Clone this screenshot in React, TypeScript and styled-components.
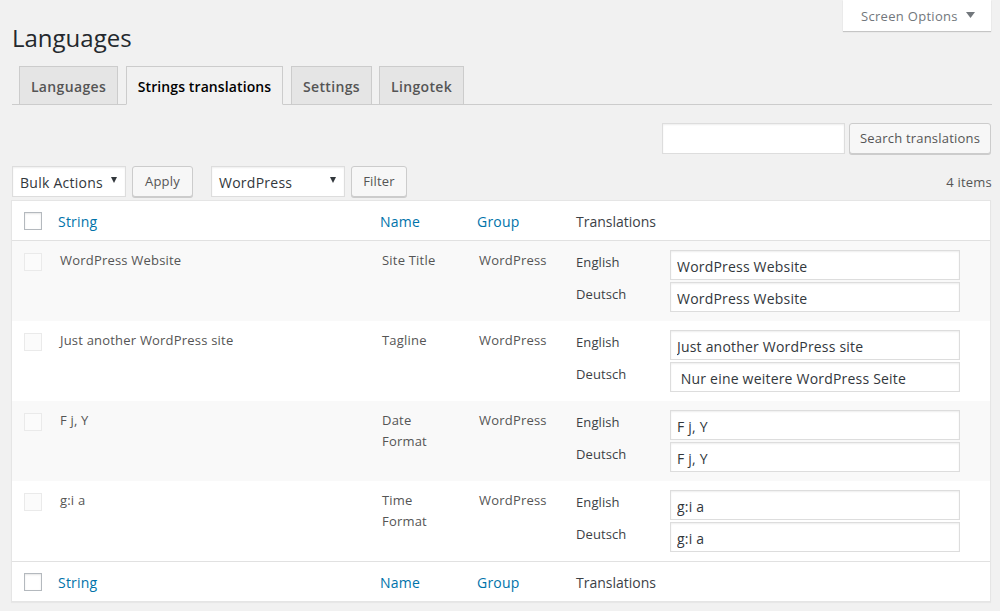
import React from "react";
import styled, { createGlobalStyle } from "styled-components";

const Global = createGlobalStyle`
  html, body { margin: 0; padding: 0; background: #f1f1f1; }
  body { font-family: "Open Sans", "Noto Sans", sans-serif; font-size: 13px; color: #444; }
  * { box-sizing: border-box; }
`;

const Page = styled.div`
  width: 1000px;
  height: 611px;
  padding: 0 8px 0 12px;
  overflow: hidden;
`;
const ScreenMeta = styled.div`
  display: flex;
  justify-content: flex-end;
  height: 32px;
  padding-right: 1px;
`;
const ScreenOptions = styled.div`
  width: 148px;
  height: 31px;
  background: #fff;
  box-shadow: 0 1px 1px rgba(0, 0, 0, 0.18);
  display: flex;
  align-items: center;
  gap: 8px;
  padding: 0 0 0 18px;
  font-size: 13px;
  letter-spacing: 0.3px;
  line-height: 32px;
  color: #72777c;
`;
const Caret = styled.svg`
  display: block;
  flex: none;
  margin-top: -1px;
`;
const Title = styled.h1`
  margin: -9px 0 0;
  font-size: 24px;
  font-weight: 400;
  line-height: 29px;
  height: 29px;
  color: #23282d;
`;
const Tabs = styled.div`
  display: flex;
  margin-top: 14px;
  height: 39px;
  padding-left: 7px;
  gap: 8px;
  border-bottom: 1px solid #ccc;
`;
const Tab = styled.div<{ $active?: boolean; $w: number; $ml?: number }>`
  width: ${(p) => p.$w}px;
  height: ${(p) => (p.$active ? 39 : 38)}px;
  margin-left: ${(p) => p.$ml ?? 0}px;
  border: 1px solid #ccc;
  border-bottom: ${(p) => (p.$active ? "1px solid #f1f1f1" : "none")};
  background: ${(p) => (p.$active ? "#f1f1f1" : "#e5e5e5")};
  color: ${(p) => (p.$active ? "#000" : "#555")};
  font-size: 14px;
  font-weight: 600;
  letter-spacing: ${(p) => (p.$active ? 0.1 : 0.35)}px;
  line-height: 40px;
  text-align: center;
  white-space: nowrap;
`;
const SearchRow = styled.div`
  display: flex;
  justify-content: flex-end;
  gap: 4px;
  margin-top: 18px;
  padding-right: 1px;
  height: 31px;
`;
const SearchInput = styled.input`
  width: 183px;
  height: 31px;
  background: #fff;
  border: 1px solid #ddd;
  box-shadow: inset 0 1px 2px rgba(0, 0, 0, 0.07);
  padding: 0 6px;
  outline: none;
`;
const Button = styled.button<{ $w: number; $ml?: number }>`
  width: ${(p) => p.$w}px;
  height: 31px;
  margin-left: ${(p) => p.$ml ?? 0}px;
  padding: 0 0 2px;
  background: #f7f7f7;
  border: 1px solid #ccc;
  border-radius: 3px;
  box-shadow: 0 1px 0 #ccc;
  color: #555;
  font-family: inherit;
  font-size: 13px;
  letter-spacing: 0.2px;
  line-height: 26px;
  white-space: nowrap;
`;
const Toolbar = styled.div`
  display: flex;
  align-items: flex-start;
  margin-top: 12px;
  height: 34px;
`;
const SelectBox = styled.div<{ $w: number; $ml?: number }>`
  position: relative;
  width: ${(p) => p.$w}px;
  height: 31px;
  margin-left: ${(p) => p.$ml ?? 0}px;
  background: #fff;
  border: 1px solid #ddd;
  box-shadow: inset 0 1px 2px rgba(0, 0, 0, 0.07);
  color: #32373c;
  font-size: 14px;
  letter-spacing: 0.25px;
  line-height: 31px;
  padding-left: 7px;
  white-space: nowrap;
`;
const SelectCaret = styled.svg`
  position: absolute;
  right: 8px;
  top: 10px;
`;
const Count = styled.div`
  margin-left: auto;
  color: #555;
  font-size: 13px;
  letter-spacing: 0.2px;
  line-height: 32px;
`;
const Table = styled.table`
  width: 980px;
  margin-left: -1px;
  table-layout: fixed;
  border-collapse: separate;
  border-spacing: 0;
  background: #fff;
  border: 1px solid #e5e5e5;
  box-shadow: 0 1px 1px rgba(0, 0, 0, 0.04);
`;
const HeadCell = styled.th<{ $w?: number; $top?: boolean; $link?: boolean }>`
  ${(p) => (p.$w ? `width: ${p.$w}px;` : "")}
  height: 40px;
  padding: 1px 0 0;
  font-size: 14px;
  font-weight: 400;
  letter-spacing: ${(p) => (p.$link ? 0.2 : 0)}px;
  text-align: left;
  color: ${(p) => (p.$link ? "#0073aa" : "#3c4146")};
  ${(p) => (p.$top ? "border-bottom: 1px solid #e1e1e1;" : "border-top: 1px solid #e1e1e1;")}
`;
const HeadCheck = styled.span`
  display: block;
  width: 18px;
  height: 18px;
  margin-left: 12px;
  margin-top: -1px;
  border: 1px solid #b4b9be;
  background: #fff;
  box-shadow: inset 0 1px 2px rgba(0, 0, 0, 0.1);
`;
const Row = styled.tr<{ $alt: boolean }>`
  background: ${(p) => (p.$alt ? "#f9f9f9" : "#fff")};
`;
const Cell = styled.td`
  height: 80px;
  vertical-align: top;
  padding: 9px 4px 0 2px;
  font-size: 13px;
  letter-spacing: 0.2px;
  line-height: 21px;
  color: #555;
`;
const NameCell = styled(Cell)`
  padding-right: 24px;
`;
const RowCheck = styled.span`
  display: block;
  width: 18px;
  height: 18px;
  margin: 3px 0 0 10px;
  border: 1px solid #eaeaea;
  background: #fbfbfb;
`;
const TransCell = styled.td`
  height: 80px;
  vertical-align: top;
  padding: 9px 0 0;
`;
const TransRow = styled.div`
  display: flex;
  height: 30px;
  margin-bottom: 2px;
`;
const Lang = styled.label`
  width: 94px;
  font-size: 13px;
  letter-spacing: 0.1px;
  line-height: 25px;
  color: #3c4146;
`;
const TransInput = styled.input`
  width: 290px;
  height: 30px;
  padding: 2px 6px 0;
  background: #fff;
  border: 1px solid #ddd;
  box-shadow: inset 0 1px 2px rgba(0, 0, 0, 0.07);
  color: #32373c;
  font-family: inherit;
  font-size: 14px;
  letter-spacing: 0.2px;
  white-space: pre;
  outline: none;
`;

const rows = [
  { s: "WordPress Website", n: "Site Title", en: "WordPress Website", de: "WordPress Website" },
  { s: "Just another WordPress site", n: "Tagline", en: "Just another WordPress site", de: " Nur eine weitere WordPress Seite" },
  { s: "F j, Y", n: "Date Format", en: "F j, Y", de: "F j, Y" },
  { s: "g:i a", n: "Time Format", en: "g:i a", de: "g:i a" },
];

const SmallTriangle = () => (
  <SelectCaret width="6" height="6" viewBox="0 0 6 6"><path d="M0 0H6L3 6Z" fill="#32373c" /></SelectCaret>
);

const HeaderRow = ({ top }: { top?: boolean }) => (
  <tr>
    <HeadCell $w={46} $top={top}><HeadCheck /></HeadCell>
    <HeadCell $w={322} $link $top={top}>String</HeadCell>
    <HeadCell $w={97} $link $top={top}>Name</HeadCell>
    <HeadCell $w={99} $link $top={top}>Group</HeadCell>
    <HeadCell $top={top}>Translations</HeadCell>
  </tr>
);

export default function App() {
  return (
    <Page>
      <Global />
      <ScreenMeta>
        <ScreenOptions>
          Screen Options
          <Caret width="9" height="6" viewBox="0 0 9 6"><path d="M0 0H9L4.5 6Z" fill="#72777c" /></Caret>
        </ScreenOptions>
      </ScreenMeta>
      <Title>Languages</Title>
      <Tabs>
        <Tab $w={99}>Languages</Tab>
        <Tab $w={157} $active>Strings translations</Tab>
        <Tab $w={81}>Settings</Tab>
        <Tab $w={85} $ml={-1}>Lingotek</Tab>
      </Tabs>
      <SearchRow>
        <SearchInput type="text" />
        <Button $w={142}>Search translations</Button>
      </SearchRow>
      <Toolbar>
        <SelectBox $w={114}>
          Bulk Actions
          <SmallTriangle />
        </SelectBox>
        <Button $w={61} $ml={6}>Apply</Button>
        <SelectBox $w={134} $ml={18}>
          WordPress
          <SmallTriangle />
        </SelectBox>
        <Button $w={56} $ml={6}>Filter</Button>
        <Count>4 items</Count>
      </Toolbar>
      <Table>
        <thead>
          <HeaderRow top />
        </thead>
        <tbody>
          {rows.map((r, i) => (
            <Row key={r.s} $alt={i % 2 === 0}>
              <Cell><RowCheck /></Cell>
              <Cell>{r.s}</Cell>
              <NameCell>{r.n}</NameCell>
              <Cell>WordPress</Cell>
              <TransCell>
                <TransRow>
                  <Lang>English</Lang>
                  <TransInput readOnly value={r.en} />
                </TransRow>
                <TransRow>
                  <Lang>Deutsch</Lang>
                  <TransInput readOnly value={r.de} />
                </TransRow>
              </TransCell>
            </Row>
          ))}
        </tbody>
        <tfoot>
          <HeaderRow />
        </tfoot>
      </Table>
    </Page>
  );
}
